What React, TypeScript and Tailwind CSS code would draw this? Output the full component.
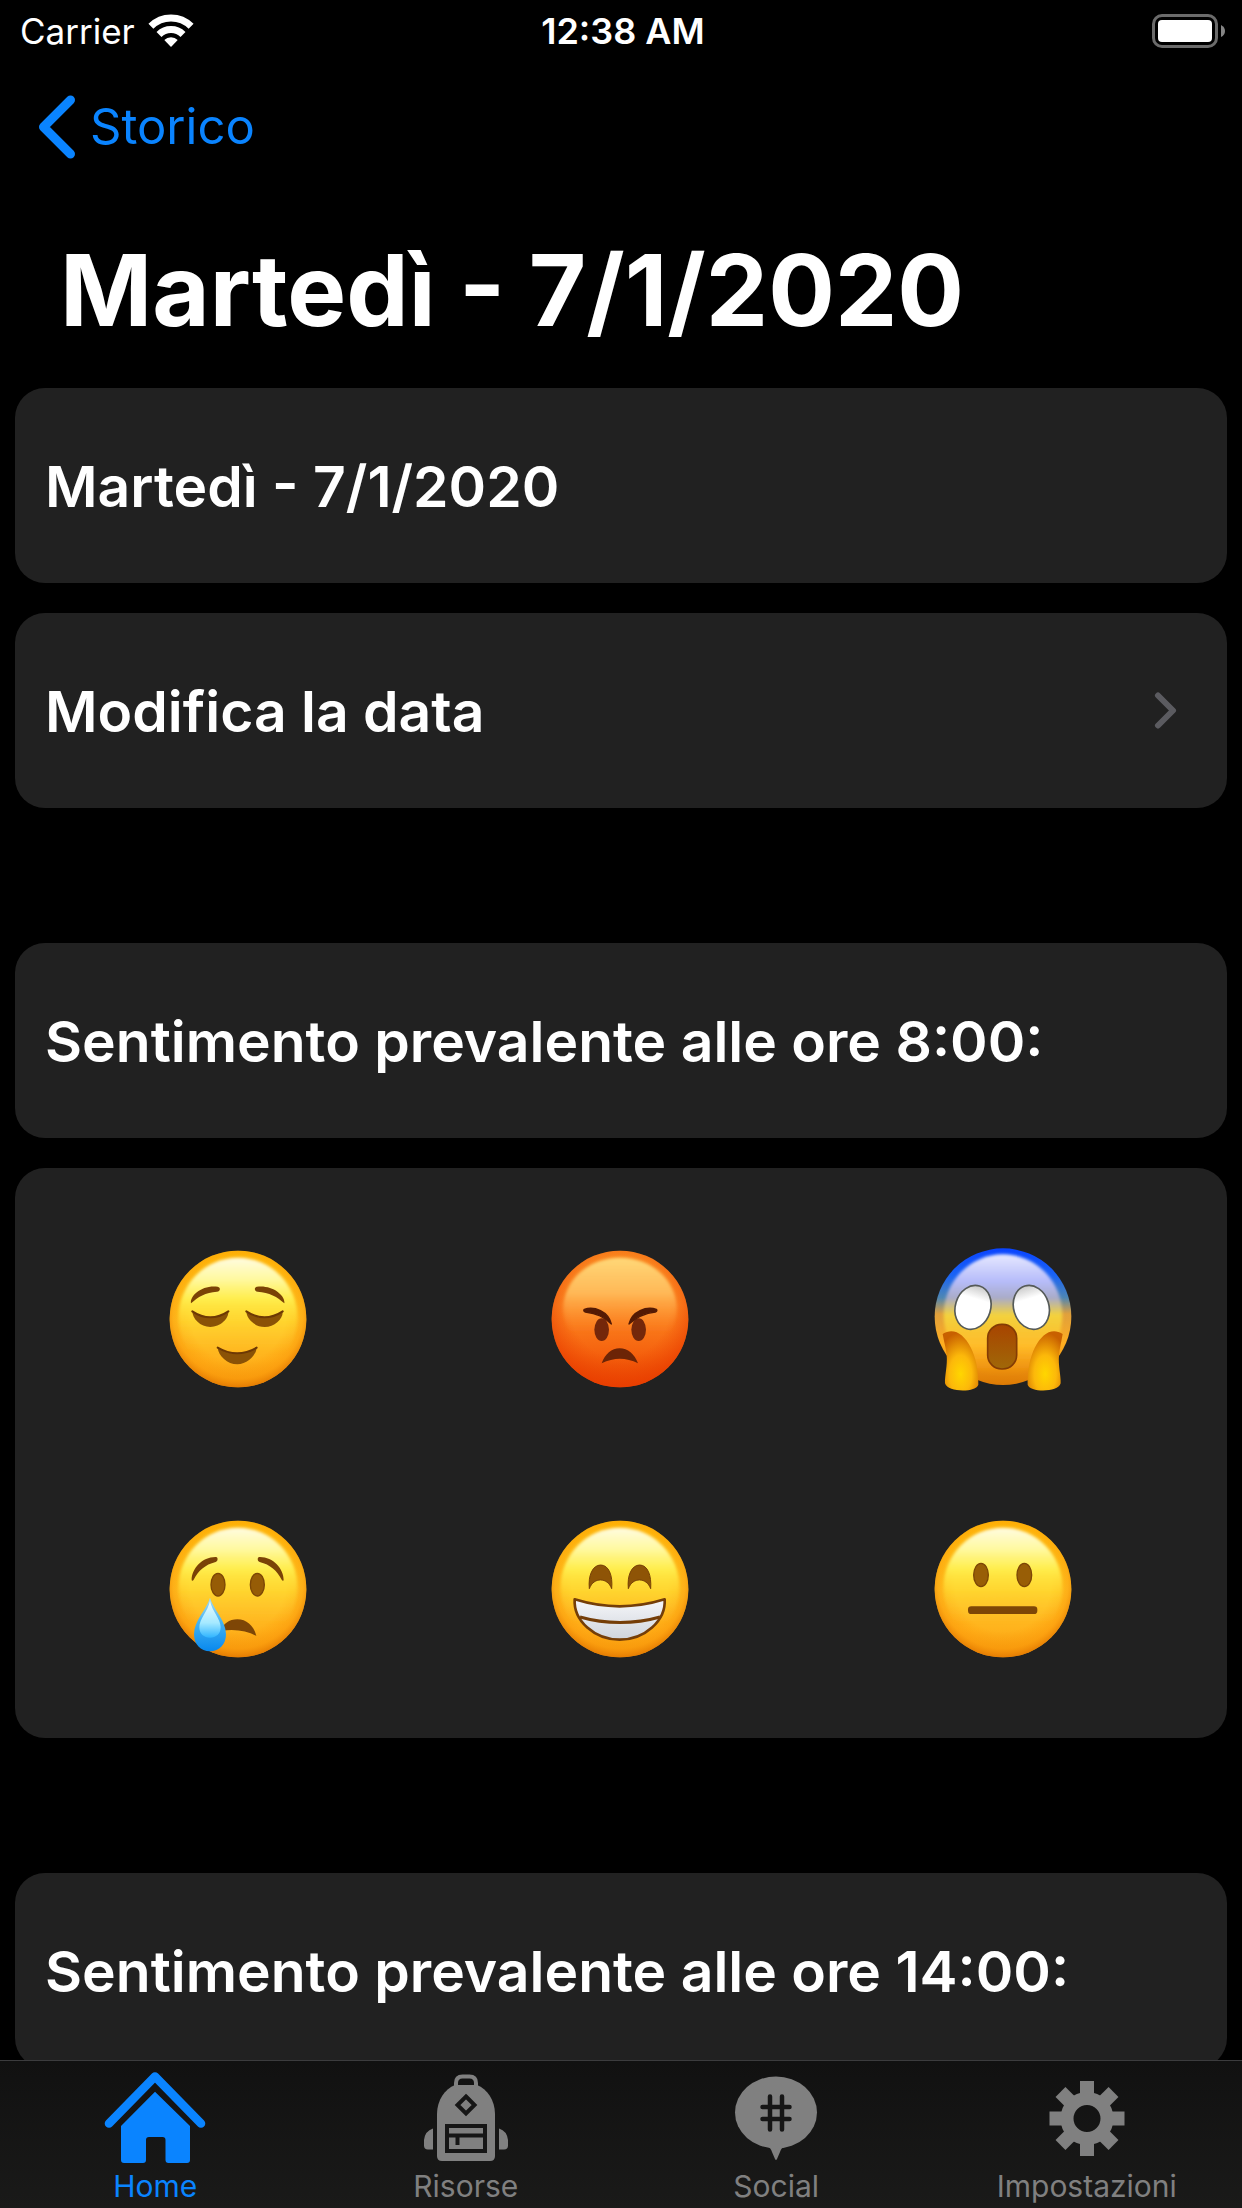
import type { ReactNode } from "react";

function WifiIcon() {
  return (
    <svg className="h-9 w-12" viewBox="0 0 48 36" fill="none" aria-hidden="true">
      <path d="M3.9 13.2a28.5 28.5 0 0 1 40.2 0" stroke="#fff" strokeWidth="7" />
      <path d="M12 21.4a17 17 0 0 1 24 0" stroke="#fff" strokeWidth="7" />
      <path d="M17.3 27a9.5 9.5 0 0 1 13.4 0L24 34Z" fill="#fff" />
    </svg>
  );
}

function BatteryIcon() {
  return (
    <svg className="h-9 w-[74px]" viewBox="0 0 74 36" fill="none" aria-hidden="true">
      <rect x="1.5" y="2.5" width="63" height="31" rx="8.5" stroke="#6b6b6b" strokeWidth="3" />
      <rect x="6" y="7" width="54" height="22" rx="4" fill="#fff" />
      <path d="M69 12q4 2 4 6t-4 6Z" fill="#858585" />
    </svg>
  );
}

function Face({ box, head, children }: { box: string; head?: ReactNode; children: ReactNode }) {
  return (
    <svg className="size-[180px]" viewBox={box} aria-hidden="true">
      {head}
      {children}
    </svg>
  );
}

function YellowHead({ cx }: { cx: number }) {
  return (
    <>
      <circle cx={cx} cy="267" r="205" fill="url(#yellowBase)" />
      <circle cx={cx} cy="267" r="205" fill="url(#yellowRim)" />
      <ellipse cx={cx} cy="262" rx="178" ry="179" fill="url(#yellowShine)" filter="url(#soften)" />
    </>
  );
}

function Gradients() {
  return (
    <svg className="absolute size-0" aria-hidden="true">
      <defs>
        <filter id="soften" x="-.1" y="-.1" width="1.2" height="1.2">
          <feGaussianBlur stdDeviation="5" />
        </filter>
        <linearGradient id="yellowBase" x1="0" y1="0" x2="0" y2="1">
          <stop offset="0" stopColor="#ffc008" />
          <stop offset=".5" stopColor="#ffcb2a" />
          <stop offset=".8" stopColor="#ffb21c" />
          <stop offset="1" stopColor="#f39a10" />
        </linearGradient>
        <radialGradient id="yellowRim" cx=".5" cy=".46" r=".54">
          <stop offset=".65" stopColor="#ff9500" stopOpacity="0" />
          <stop offset=".88" stopColor="#fb9406" stopOpacity=".5" />
          <stop offset="1" stopColor="#e27700" stopOpacity=".85" />
        </radialGradient>
        <linearGradient id="yellowShine" x1="0" y1="0" x2="0" y2="1">
          <stop offset="0" stopColor="#fffbe0" />
          <stop offset=".18" stopColor="#fff9a0" />
          <stop offset=".35" stopColor="#fff150" stopOpacity=".9" />
          <stop offset=".55" stopColor="#ffdc30" stopOpacity=".5" />
          <stop offset=".8" stopColor="#ffc43a" stopOpacity="0" />
        </linearGradient>
        <linearGradient id="redBase" x1="0" y1="0" x2="0" y2="1">
          <stop offset="0" stopColor="#fb8a20" />
          <stop offset=".4" stopColor="#fd8a24" />
          <stop offset=".75" stopColor="#f5620e" />
          <stop offset="1" stopColor="#e84200" />
        </linearGradient>
        <radialGradient id="redRim" cx=".5" cy=".42" r=".6">
          <stop offset=".6" stopColor="#ee4a04" stopOpacity="0" />
          <stop offset="1" stopColor="#e83c00" stopOpacity=".9" />
        </radialGradient>
        <linearGradient id="redShine" x1="0" y1="0" x2="0" y2="1">
          <stop offset="0" stopColor="#ffd878" />
          <stop offset=".35" stopColor="#ffbd5c" stopOpacity=".9" />
          <stop offset=".75" stopColor="#fc8424" stopOpacity="0" />
        </linearGradient>
        <linearGradient id="fearBase" x1="0" y1="0" x2="0" y2="1">
          <stop offset="0" stopColor="#0a44ff" />
          <stop offset=".2" stopColor="#1a64f4" />
          <stop offset=".36" stopColor="#4d86b4" />
          <stop offset=".48" stopColor="#e0a03c" />
          <stop offset=".7" stopColor="#ffae20" />
          <stop offset="1" stopColor="#dd7a04" />
        </linearGradient>
        <linearGradient id="fearShine" x1="0" y1="0" x2="0" y2="1">
          <stop offset="0" stopColor="#e6e8ff" />
          <stop offset=".22" stopColor="#b6bcfa" />
          <stop offset=".36" stopColor="#a9abc8" />
          <stop offset=".5" stopColor="#f3d23c" />
          <stop offset=".75" stopColor="#ffc02c" stopOpacity=".8" />
          <stop offset="1" stopColor="#f79a10" stopOpacity="0" />
        </linearGradient>
        <linearGradient id="fearMouth" x1="0" y1="0" x2="0" y2="1">
          <stop offset="0" stopColor="#a84400" />
          <stop offset="1" stopColor="#a06808" />
        </linearGradient>
        <radialGradient id="hand" cx=".5" cy=".72" r=".7">
          <stop offset="0" stopColor="#ffd600" />
          <stop offset=".45" stopColor="#fcb80a" />
          <stop offset="1" stopColor="#c86000" />
        </radialGradient>
        <linearGradient id="eyeWhite" x1="0" y1="0" x2="0" y2="1">
          <stop offset="0" stopColor="#c9c9c9" />
          <stop offset=".3" stopColor="#fff" />
        </linearGradient>
        <linearGradient id="tear" x1="0" y1="0" x2="0" y2="1">
          <stop offset="0" stopColor="#a8ddf4" />
          <stop offset=".45" stopColor="#46b4f2" />
          <stop offset="1" stopColor="#0888ee" />
        </linearGradient>
        <linearGradient id="tearShine" x1="0" y1="0" x2="0" y2="1">
          <stop offset="0" stopColor="#effcff" />
          <stop offset=".6" stopColor="#a5e9ff" />
          <stop offset="1" stopColor="#2fb4ff" />
        </linearGradient>
        <linearGradient id="teeth" x1="0" y1="0" x2="0" y2="1">
          <stop offset="0" stopColor="#f6f7fa" />
          <stop offset="1" stopColor="#cfd4dc" />
        </linearGradient>
      </defs>
    </svg>
  );
}

function Relieved() {
  return (
    <Face box="-5 -6 540 540" head={<YellowHead cx={265} />}>
      <path d="M124 220c-4-24 34-56 80-50 10 2 8 14-2 15-34 2-58 16-78 35Z" fill="#7a4206" />
      <path d="M404 220c4-24-36-56-82-50-10 2-8 14 2 15 34 2 60 16 80 35Z" fill="#7a4206" />
      <path d="M128 244c34 26 72 26 108 0 2 22-24 47-54 47s-54-25-54-47Z" fill="#8a5206" />
      <path d="M290 244c36 26 74 26 109 0 2 22-24 47-54 47s-55-25-55-47Z" fill="#8a5206" />
      <path d="M204 353c38 24 78 24 117 0-2 24-28 50-58 50s-57-26-59-50Z" fill="#8a5206" />
      <path d="M128 244q54 36 108 0M290 244q54 36 109 0M204 353q58 34 117 0" fill="none" stroke="#6d3804" strokeWidth="6" strokeLinecap="round" />
    </Face>
  );
}

function Angry() {
  return (
    <Face
      box="3 -6 540 540"
      head={
        <>
          <circle cx="270" cy="267" r="205" fill="url(#redBase)" />
          <circle cx="270" cy="267" r="205" fill="url(#redRim)" />
          <ellipse cx="270" cy="236" rx="170" ry="153" fill="url(#redShine)" filter="url(#soften)" />
        </>
      }
    >
      <ellipse cx="215" cy="299" rx="22" ry="34" fill="#74270a" />
      <ellipse cx="326" cy="299" rx="22" ry="34" fill="#74270a" />
      <path d="M163 238c30-10 72 6 81 44-22-20-42-32-78-36-5-1-6-6-3-8Z" fill="#541a04" stroke="#541a04" strokeWidth="4" strokeLinejoin="round" />
      <path d="M379 238c-30-10-73 6-82 44 22-20 43-32 79-36 5-1 6-6 3-8Z" fill="#541a04" stroke="#541a04" strokeWidth="4" strokeLinejoin="round" />
      <path d="M215 400c10-28 30-45 54-45s45 17 55 45c-36-18-72-18-109 0Z" fill="#6c2406" />
    </Face>
  );
}

function Screaming() {
  return (
    <Face box="13 -6 540 540">
      <circle cx="280" cy="260" r="205" fill="url(#fearBase)" />
      <ellipse cx="280" cy="255" rx="178" ry="182" fill="url(#fearShine)" filter="url(#soften)" />
      <ellipse cx="190" cy="232" rx="53" ry="67" transform="rotate(17 190 232)" fill="url(#eyeWhite)" stroke="#555a58" strokeWidth="5" />
      <ellipse cx="365" cy="232" rx="53" ry="67" transform="rotate(-17 365 232)" fill="url(#eyeWhite)" stroke="#555a58" strokeWidth="5" />
      <rect x="234" y="283" width="87" height="134" rx="42" fill="url(#fearMouth)" stroke="#843c04" strokeWidth="5" />
      <path d="M99 312c54-36 110 50 107 152-6 24-92 24-100-4-1-22 8-54 5-84-2-22-8-40-12-64Z" fill="url(#hand)" />
      <path d="M459 312c-54-36-108 50-105 152 6 24 92 24 99-4 1-22-8-54-5-84 2-22 7-40 11-64Z" fill="url(#hand)" />
    </Face>
  );
}

function Crying() {
  return (
    <Face box="-5 -6 540 540" head={<YellowHead cx={265} />}>
      <path d="M126 240c0-34 32-70 73-69 7 1 6 13-1 15-32 8-52 26-66 53-2 4-6 4-6 1Z" fill="#7a4206" />
      <path d="M402 240c0-34-32-70-73-69-7 1-6 13 1 15 32 8 52 26 66 53 2 4 6 4 6 1Z" fill="#7a4206" />
      <ellipse cx="205" cy="254" rx="21" ry="34" fill="#965c06" stroke="#7c4606" strokeWidth="4" />
      <ellipse cx="323" cy="254" rx="21" ry="34" fill="#965c06" stroke="#7c4606" strokeWidth="4" />
      <path d="M215 392c4-20 24-34 48-34 28 0 50 20 57 50-28-16-62-22-105-16Z" fill="#7e4606" />
      <path d="M181 293c10 36 48 68 48 110 0 30-20 51-48 51s-48-21-48-51c0-42 38-74 48-110Z" fill="url(#tear)" />
      <path d="M181 302c6 32 32 54 32 80 0 20-14 31-32 31s-32-11-32-31c0-26 26-48 32-80Z" fill="url(#tearShine)" />
    </Face>
  );
}

function Grinning() {
  return (
    <Face box="3 -6 540 540" head={<YellowHead cx={270} />}>
      <path d="M178 266c-4-40 10-71 34-71s37 31 33 71c-12-34-54-36-67 0Z" fill="#8e5406" stroke="#784206" strokeWidth="3" />
      <path d="M295 266c-4-40 10-71 34-71s36 31 33 71c-12-34-54-36-67 0Z" fill="#8e5406" stroke="#784206" strokeWidth="3" />
      <path d="M134 298c90 28 180 28 270 0 4 64-60 121-135 121s-139-57-135-121Z" fill="url(#teeth)" stroke="#753e08" strokeWidth="8" strokeLinejoin="round" />
      <path d="M150 351c76 22 164 22 240 0" fill="none" stroke="#753e08" strokeWidth="9" />
    </Face>
  );
}

function Neutral() {
  return (
    <Face box="13 -6 540 540" head={<YellowHead cx={280} />}>
      <ellipse cx="214" cy="225" rx="22" ry="35" fill="#985e06" stroke="#7c4606" strokeWidth="4" />
      <ellipse cx="344" cy="225" rx="22" ry="35" fill="#985e06" stroke="#7c4606" strokeWidth="4" />
      <rect x="175" y="319" width="208" height="23" rx="10" fill="#7e4606" />
    </Face>
  );
}

const feelings = [
  { name: "Sereno", icon: <Relieved /> },
  { name: "Arrabbiato", icon: <Angry /> },
  { name: "Spaventato", icon: <Screaming /> },
  { name: "Triste", icon: <Crying /> },
  { name: "Felice", icon: <Grinning /> },
  { name: "Neutro", icon: <Neutral /> },
];

function TabIcon({ children }: { children: ReactNode }) {
  return (
    <svg className="h-[100px] w-[110px]" viewBox="0 0 110 100" fill="none" aria-hidden="true">
      {children}
    </svg>
  );
}

const tabs = [
  {
    label: "Home",
    active: true,
    icon: (
      <TabIcon>
        <path d="M9 56.5 55 9.5l46 47" stroke="currentColor" strokeWidth="8.6" strokeLinecap="round" strokeLinejoin="round" />
        <path d="M55 24.7 90 59v34q0 3-3 3H68.500q-3 0-3-3V73q0-3-3-3h-13.500q-3 0-3 3v20q0 3-3 3H24q-3 0-3-3V59Z" fill="currentColor" />
      </TabIcon>
    ),
  },
  {
    label: "Risorse",
    active: false,
    icon: (
      <TabIcon>
        <path d="M45 20v-4q0-6.500 6.500-6.500h7q6.500 0 6.500 6.500v4" stroke="currentColor" strokeWidth="4" />
        <path d="M26 47c0-14 8-25 18-29h22c10 4 18 15 18 29v42q0 5-5 5H31q-5 0-5-5Z" fill="currentColor" />
        <path d="M22 61.500v21h-5q-4 0-4-4V73q1-9 9-11.500ZM88 61.500v21h5q4 0 4-4V73q-1-9-9-11.500Z" fill="currentColor" />
        <path d="m55 29.500 8.500 8.500-8.500 8.500-8.500-8.500ZM36 59h38v25H36ZM36 68.500h38M46.500 68.500v9.500" stroke="#161616" strokeWidth="4" />
      </TabIcon>
    ),
  },
  {
    label: "Social",
    active: false,
    icon: (
      <TabIcon>
        <ellipse cx="55" cy="45.500" rx="41" ry="36" fill="currentColor" />
        <path d="M46 79q4 2 5 6l3 7q1 2 2 0l3-7q1-4 5-6Z" fill="currentColor" />
        <path d="M49 29.500v33M61 29.500v33M41.500 40h27M41.500 52h27" stroke="#161616" strokeWidth="4.500" strokeLinecap="round" />
      </TabIcon>
    ),
  },
  {
    label: "Impostazioni",
    active: false,
    icon: (
      <TabIcon>
        <circle cx="55" cy="51.500" r="20" stroke="currentColor" strokeWidth="13" />
        {[0, 45, 90, 135, 180, 225, 270, 315].map((angle) => (
          <rect key={angle} x="48" y="14" width="14" height="16" fill="currentColor" transform={`rotate(${angle} 55 51.500)`} />
        ))}
      </TabIcon>
    ),
  },
];

function Card({ children }: { children: ReactNode }) {
  return (
    <h2 className="flex h-[195px] shrink-0 items-center rounded-[30px] bg-[#212121] px-[30px] pt-0.5 text-[57px] font-semibold">
      {children}
    </h2>
  );
}

export default function App() {
  return (
    <div className="flex h-screen flex-col overflow-hidden bg-black font-['Inter',sans-serif] text-white">
      <Gradients />
      <header className="shrink-0">
        <div className="grid h-[60px] grid-cols-3 items-center pt-0.5 pr-4 pl-5 text-[35px]">
          <div className="flex items-center gap-3">
            <span>Carrier</span>
            <WifiIcon />
          </div>
          <time className="text-center text-[36px] font-semibold">12:38 AM</time>
          <div className="flex justify-end">
            <BatteryIcon />
          </div>
        </div>
        <a href="#storico" className="flex h-[132px] items-center gap-2.5 pt-0.5 pl-9 text-[49px] text-[#0a84ff]">
          <svg className="h-16 w-11" viewBox="0 0 44 64" fill="none" aria-hidden="true">
            <path d="M34.500 5 7.500 32l27 27" stroke="currentColor" strokeWidth="9" strokeLinecap="round" strokeLinejoin="round" />
          </svg>
          Storico
        </a>
        <h1 className="flex h-[196px] items-center px-[60px] text-[99px] font-bold">Martedì - 7/1/2020</h1>
      </header>

      <main className="flex min-h-0 flex-1 flex-col overflow-hidden px-[15px]">
        <div className="flex flex-col gap-[30px]">
          <Card>Martedì - 7/1/2020</Card>
          <button type="button" className="flex h-[195px] items-center justify-between rounded-[30px] bg-[#212121] pt-0.5 pr-[47px] pl-[30px] text-left text-[57px] font-semibold">
            Modifica la data
            <svg className="h-10 w-7" viewBox="0 0 28 40" fill="none" aria-hidden="true">
              <path d="m6 3.500 15 15-15 15" stroke="#5b5b60" strokeWidth="6" strokeLinecap="round" strokeLinejoin="round" />
            </svg>
          </button>
        </div>

        <section className="mt-[135px] flex flex-col gap-[30px]">
          <Card>Sentimento prevalente alle ore 8:00:</Card>
          <div className="grid grid-cols-3 rounded-[30px] bg-[#212121] px-8 py-[15px]">
            {feelings.map((feeling) => (
              <button key={feeling.name} type="button" aria-label={feeling.name} className="flex h-[270px] items-center justify-center">
                {feeling.icon}
              </button>
            ))}
          </div>
        </section>

        <section className="mt-[135px]">
          <Card>Sentimento prevalente alle ore 14:00:</Card>
        </section>
      </main>

      <nav className="grid h-[148px] shrink-0 grid-cols-4 border-t border-[#3c3c3e] bg-linear-to-b from-[#111111] to-[#1a1a19]">
        {tabs.map((tab) => (
          <a
            key={tab.label}
            href={`#${tab.label.toLowerCase()}`}
            aria-current={tab.active ? "page" : undefined}
            className={`flex flex-col items-center pt-1.5 text-[30px] leading-[38px] ${tab.active ? "text-[#0a84ff]" : "text-[#808080]"}`}
          >
            {tab.icon}
            {tab.label}
          </a>
        ))}
      </nav>
    </div>
  );
}
